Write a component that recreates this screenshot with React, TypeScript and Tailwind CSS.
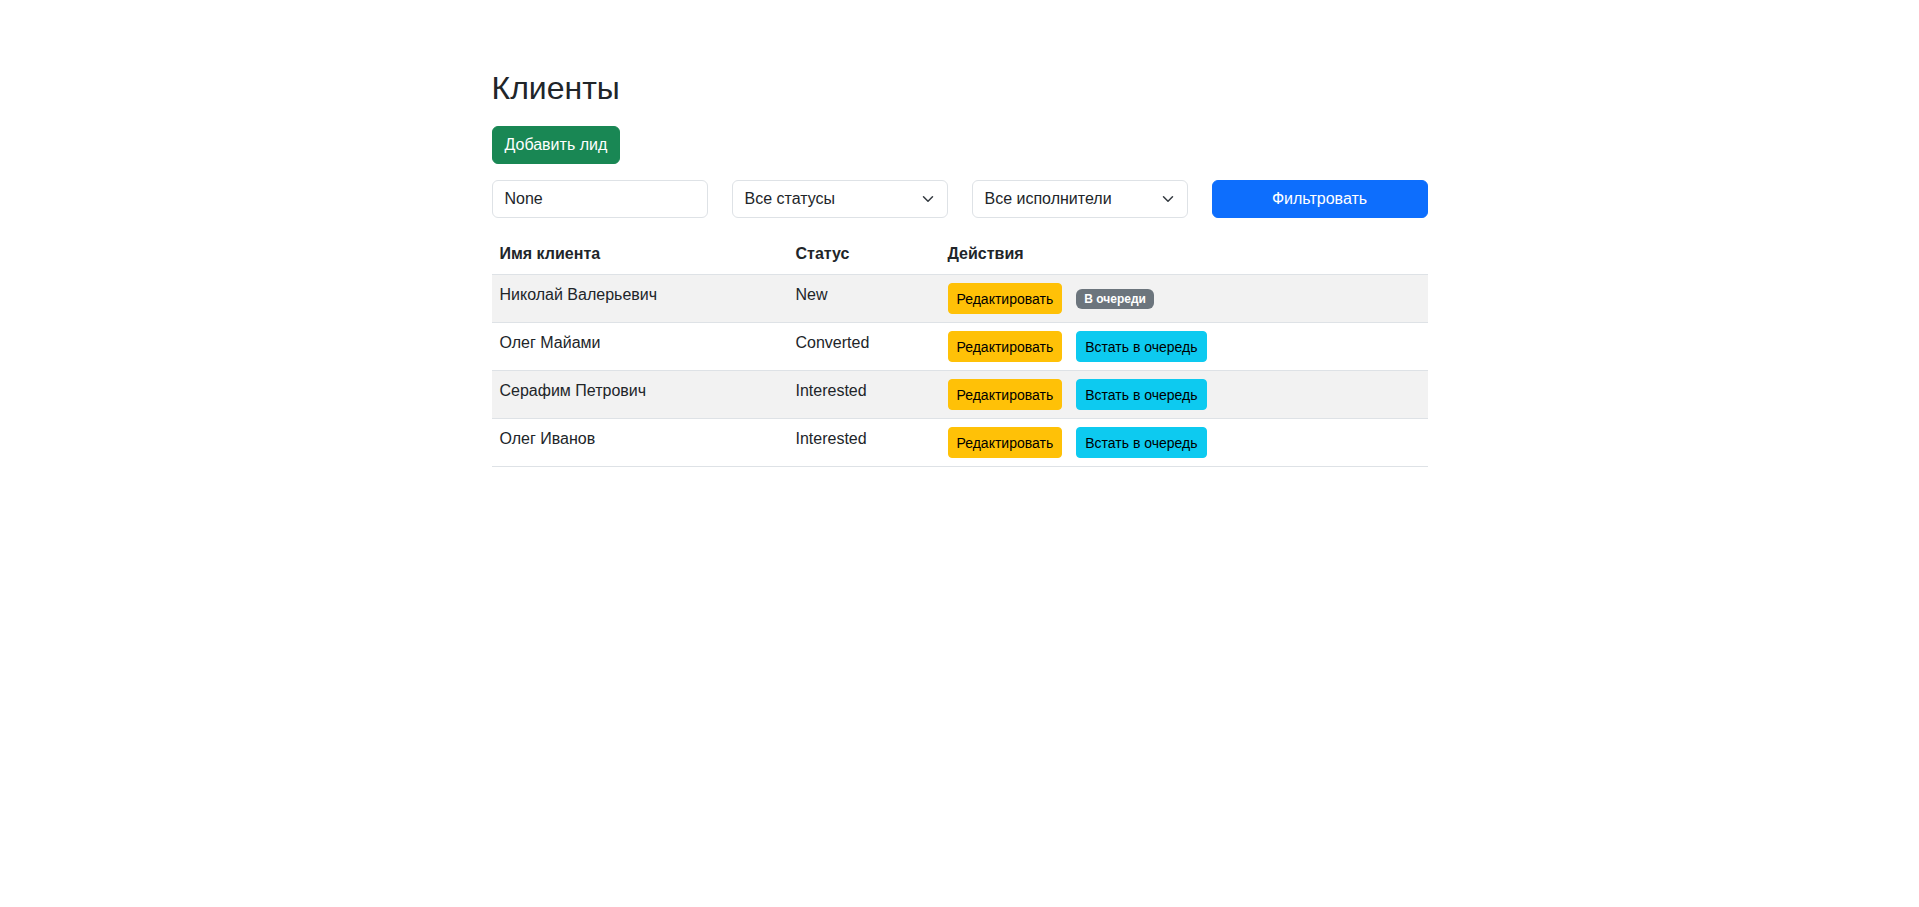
import { useState } from "react";

interface Client {
    id: number;
    name: string;
    status: string;
    queued: boolean;
}

const clients: Client[] = [
    { id: 1, name: "Николай Валерьевич", status: "New", queued: true },
    { id: 2, name: "Олег Майами", status: "Converted", queued: false },
    { id: 3, name: "Серафим Петрович", status: "Interested", queued: false },
    { id: 4, name: "Олег Иванов", status: "Interested", queued: false },
];

function Chevron() {
    return (
        <svg
            className="pointer-events-none absolute right-3 top-1/2 -translate-y-1/2"
            width="16"
            height="12"
            viewBox="0 0 16 16"
            fill="none"
        >
            <path d="m2 5 6 6 6-6" stroke="#343a40" strokeWidth="2" strokeLinecap="round" strokeLinejoin="round" />
        </svg>
    );
}

export default function App() {
    const [search, setSearch] = useState("None");
    const [status, setStatus] = useState("");
    const [executor, setExecutor] = useState("");

    return (
        <div className="min-h-screen bg-white text-[#212529] font-['Liberation_Sans',Arial,sans-serif]">
            <div className="w-[960px] mx-auto px-3 pt-[69px]">
                <h2 className="text-[32px] leading-[38px] font-normal mb-[19px]">Клиенты</h2>
                <button className="h-[38px] px-3 rounded-md border border-[#198754] bg-[#198754] text-white text-base mb-4">
                    Добавить лид
                </button>

                <div className="grid grid-cols-4 gap-6 mb-4">
                    <input
                        value={search}
                        onChange={(e) => setSearch(e.target.value)}
                        className="h-[38px] px-3 rounded-md border border-[#dee2e6] text-base text-[#212529] outline-none"
                    />
                    <div className="relative">
                        <select
                            value={status}
                            onChange={(e) => setStatus(e.target.value)}
                            className="w-full h-[38px] pl-3 pr-9 rounded-md border border-[#dee2e6] bg-white text-base text-[#212529] appearance-none outline-none"
                        >
                            <option value="">Все статусы</option>
                            <option value="New">New</option>
                            <option value="Converted">Converted</option>
                            <option value="Interested">Interested</option>
                        </select>
                        <Chevron />
                    </div>
                    <div className="relative">
                        <select
                            value={executor}
                            onChange={(e) => setExecutor(e.target.value)}
                            className="w-full h-[38px] pl-3 pr-9 rounded-md border border-[#dee2e6] bg-white text-base text-[#212529] appearance-none outline-none"
                        >
                            <option value="">Все исполнители</option>
                        </select>
                        <Chevron />
                    </div>
                    <button className="h-[38px] rounded-md border border-[#0d6efd] bg-[#0d6efd] text-white text-base">
                        Фильтровать
                    </button>
                </div>

                <table className="w-full border-collapse text-left text-base">
                    <thead>
                        <tr>
                            <th className="w-[296px] p-2 leading-6 font-bold border-b border-[#dee2e6]">Имя клиента</th>
                            <th className="w-[152px] p-2 leading-6 font-bold border-b border-[#dee2e6]">Статус</th>
                            <th className="p-2 leading-6 font-bold border-b border-[#dee2e6]">Действия</th>
                        </tr>
                    </thead>
                    <tbody>
                        {clients.map((c, i) => (
                            <tr key={c.id} className={i % 2 === 0 ? "bg-[#f2f2f2]" : "bg-white"}>
                                <td className="p-2 leading-6 align-top border-b border-[#dee2e6]">{c.name}</td>
                                <td className="p-2 leading-6 align-top border-b border-[#dee2e6]">{c.status}</td>
                                <td className="p-2 align-top border-b border-[#dee2e6]">
                                    <div className="flex items-center gap-[14px]">
                                        <button className="h-[31px] px-2 rounded border border-[#ffc107] bg-[#ffc107] text-sm text-black">
                                            Редактировать
                                        </button>
                                        {c.queued ? (
                                            <span className="h-5 px-[8px] flex items-center rounded-md bg-[#6c757d] text-white text-xs font-bold">
                                                В очереди
                                            </span>
                                        ) : (
                                            <button className="h-[31px] px-2 rounded border border-[#0dcaf0] bg-[#0dcaf0] text-sm text-black">
                                                Встать в очередь
                                            </button>
                                        )}
                                    </div>
                                </td>
                            </tr>
                        ))}
                    </tbody>
                </table>
            </div>
        </div>
    );
}
